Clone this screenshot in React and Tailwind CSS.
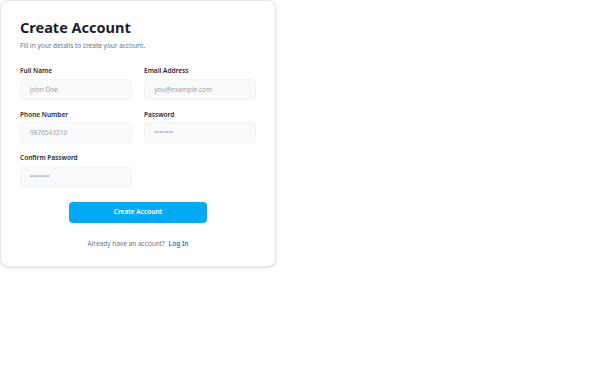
export default function App() {
  const fields = [
    { label: 'Full Name', placeholder: 'John Doe', type: 'text' },
    { label: 'Email Address', placeholder: 'you@example.com', type: 'email' },
    { label: 'Phone Number', placeholder: '9876543210', type: 'tel' },
    { label: 'Password', placeholder: '••••••••', type: 'password' },
    { label: 'Confirm Password', placeholder: '••••••••', type: 'password' },
  ];

  return (
    <div className="bg-white min-h-screen" style={{ fontFamily: '"Noto Sans", sans-serif' }}>
      <div className="w-[276px] rounded-lg border border-gray-200 bg-white shadow-sm px-[19px] pt-[17px] pb-[18px]">
        <h1 className="text-[14.5px] leading-[18px] font-bold text-[#1a1d2e]">Create Account</h1>
        <p className="mt-[5px] text-[6.5px] leading-[9px] text-gray-500">Fill in your details to create your account.</p>

        <div className="mt-[16px] grid grid-cols-2 gap-x-3 gap-y-[10px]">
          {fields.map((f) => (
            <div key={f.label}>
              <label className="block text-[6.5px] leading-[9px] font-semibold text-gray-800 -mb-[1.5px]">{f.label}</label>
              <input
                type="text"
                placeholder={f.placeholder}
                className="w-full h-[21px] rounded-[4px] border border-gray-100 bg-gray-50 px-[9px] text-[6.5px] text-gray-700 placeholder:text-gray-400 outline-none"
              />
            </div>
          ))}
        </div>

        <div className="mt-[15px] flex justify-center">
          <button className="w-[138px] h-[21px] rounded-[4px] bg-[#03a9f4] text-white text-[6.5px] font-semibold">
            Create Account
          </button>
        </div>

        <p className="mt-[16px] text-center text-[6.5px] leading-[9px] text-gray-500">
          Already have an account?{' '}
          <a href="#" className="ml-[2px] font-semibold text-[#0288d1]">Log In</a>
        </p>
      </div>
    </div>
  );
}
